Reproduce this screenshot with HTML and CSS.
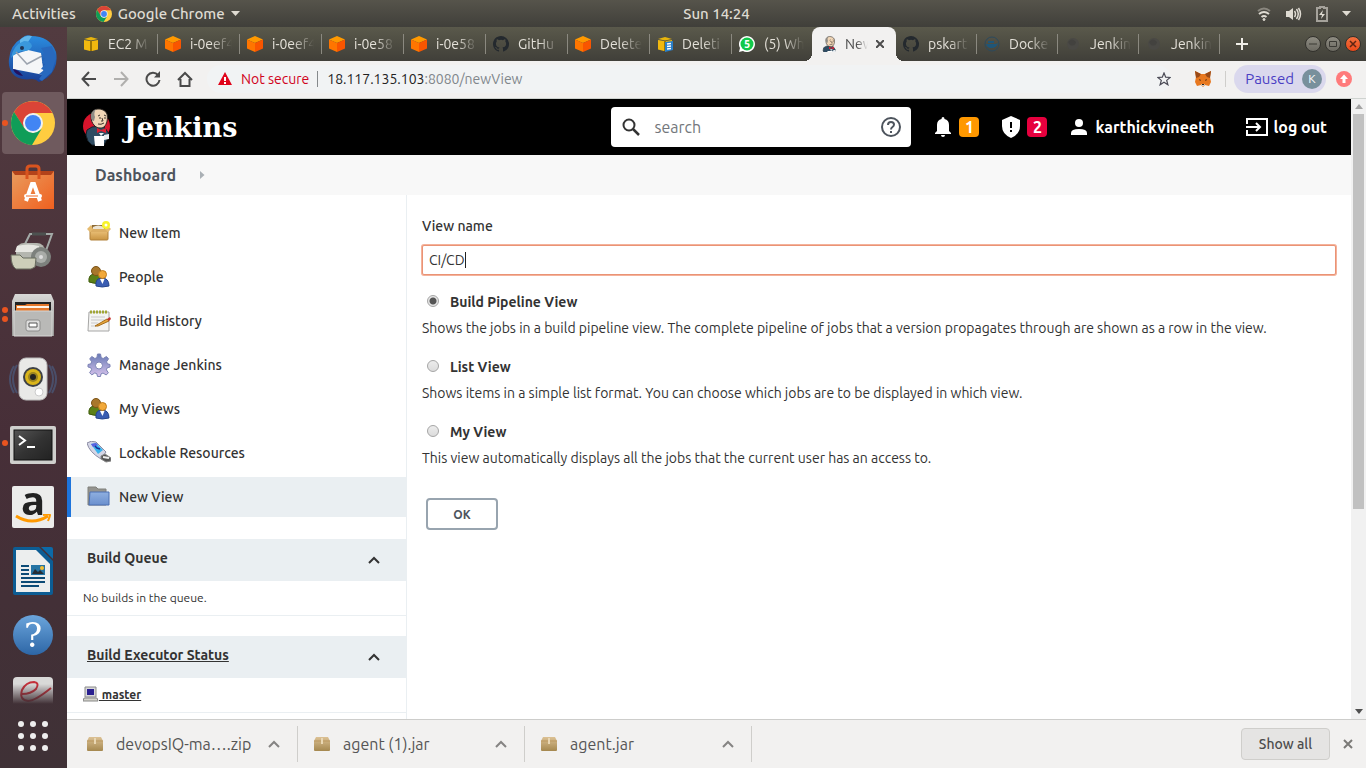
FILE: index.html
```html
<!DOCTYPE html>
<html lang="en">
<head>
<meta charset="utf-8">
<title>New View [Jenkins]</title>
<link rel="stylesheet" href="styles.css">
</head>
<body>
<svg class="defs" width="0" height="0" aria-hidden="true">
  <defs>
    <linearGradient id="gBox" x1="0" y1="0" x2="0" y2="1"><stop offset="0" stop-color="#dcc194"/><stop offset="1" stop-color="#a5884f"/></linearGradient>
    <linearGradient id="gBlue" x1="0" y1="0" x2="0" y2="1"><stop offset="0" stop-color="#2b8de0"/><stop offset="1" stop-color="#1a3f96"/></linearGradient>
    <linearGradient id="gBag" x1="0" y1="0" x2="1" y2="1"><stop offset="0" stop-color="#e99c5e"/><stop offset="1" stop-color="#f0601f"/></linearGradient>
    <linearGradient id="gGrey" x1="0" y1="0" x2="0" y2="1"><stop offset="0" stop-color="#d8d8d6"/><stop offset="1" stop-color="#959593"/></linearGradient>
    <linearGradient id="gTerm" x1="0" y1="0" x2="1" y2="1"><stop offset="0" stop-color="#555"/><stop offset=".5" stop-color="#333"/><stop offset="1" stop-color="#222"/></linearGradient>
    <linearGradient id="gGear" x1="0" y1="0" x2="0" y2="1"><stop offset="0" stop-color="#6679b5"/><stop offset="1" stop-color="#d9c4ec"/></linearGradient>
    <linearGradient id="gFold" x1="0" y1="0" x2="0" y2="1"><stop offset="0" stop-color="#8fb0e0"/><stop offset="1" stop-color="#6a8fce"/></linearGradient>
    <linearGradient id="gCard" x1="0" y1="0" x2="0" y2="1"><stop offset="0" stop-color="#eec47c"/><stop offset="1" stop-color="#c99442"/></linearGradient>
  </defs>
  <symbol id="chrome" viewBox="0 0 44 44">
    <circle cx="22" cy="22" r="22" fill="#ffcd40"/>
    <path d="M3 11A22 22 0 0 1 41.300 12H22L13 27Z" fill="#db4437"/>
    <path d="M3 11A22 22 0 0 0 21 44L30.500 28 22 32 13.300 27Z" fill="#0f9d58"/>
    <circle cx="22" cy="22" r="10" fill="#f1f1f1"/><circle cx="22" cy="22" r="8" fill="#4285f4"/>
  </symbol>
  <symbol id="cube" viewBox="0 0 16 16"><path d="M8 0l8 3.500L8 7 0 3.500Z" fill="#ff9900"/><path d="M0 3.500L8 7v9l-8-3.500Z" fill="#ff7500"/><path d="M16 3.500L8 7v9l8-3.500Z" fill="#f95500"/></symbol>
  <symbol id="ybox" viewBox="0 0 16 16"><path d="M8 1l7 2-7 1.500L1 3Z" fill="#e8b50c"/><path d="M1 4l6 1v10l-6-1.500Z" fill="#f2b90f"/><path d="M15 4L9 5v10l6-1.500Z" fill="#f2b90f"/><path d="M7 5h2v10H7Z" fill="#9f7804"/></symbol>
  <symbol id="github" viewBox="0 0 16 16"><path fill="#24292e" d="M8 0C3.580 0 0 3.580 0 8c0 3.540 2.290 6.530 5.470 7.590.4.070.55-.17.55-.38v-1.490c-2.010.37-2.530-.49-2.690-.94-.09-.23-.48-.94-.82-1.130-.28-.15-.68-.52-.01-.53.63-.01 1.080.58 1.230.82.72 1.210 1.870.87 2.330.66.07-.52.28-.87.51-1.070-1.780-.2-3.640-.89-3.640-3.950 0-.87.31-1.590.82-2.150-.08-.2-.36-1.020.08-2.120 0 0 .67-.21 2.200.82a7.600 7.600 0 0 1 4 0c1.530-1.040 2.200-.82 2.200-.82.44 1.100.16 1.920.08 2.120.51.56.82 1.270.82 2.150 0 3.070-1.870 3.750-3.650 3.950.29.25.54.73.54 1.480v2.200c0 .21.15.46.55.38A8 8 0 0 0 8 0Z"/></symbol>
  <symbol id="butler" viewBox="0 0 28 38">
    <path d="M9 19l-5 3-1 5 2 6 4 4h12l3-6 2-5-4-6-4-2Z" fill="#2f4c62" stroke="#16222c"/>
    <path d="M8 8C8-1 21-1 24 6c1 5 0 10-3 13-3 2-8 1-10-2C9 15 8 12 8 8Z" fill="#f0d6b7" stroke="#2b2723"/>
    <path d="M8 8C8 4 11 2 13 1c-2 3-2 6-1 8l-1 4Q8 13 8 8Z" fill="#8d8b85"/>
    <path d="M15 8l2-1m4 0l2 1m-7 2h2m3 0h2m-4 0l1 3h-2m-3 3q3 1 6-1" stroke="#3d332b" fill="none"/>
    <path d="M14 20l4 2 5-2v5l-5-2-4 2Z" fill="#e01f32"/>
    <path d="M16 25l2 3 3-3Z" fill="#eee"/>
    <path d="M11 28h10v10h-9Z" fill="#fff"/><path d="M21 27l5-1v5l-5 1Z" fill="#e7ecf0"/>
  </symbol>
  <symbol id="spinner" viewBox="0 0 16 16"><circle cx="8" cy="8" r="6" fill="#4a4945"/><path d="M3 6q4-5 8 0-1 5-6 3" fill="#43423f"/></symbol>
  <symbol id="parcel" viewBox="0 0 16 14"><path d="M2 0h12l2 4v9q0 1-1 1H1q-1 0-1-1V4Z" fill="url(#gBox)"/><path d="M0 4h16" stroke="#b9975e"/><path d="M7 1h2v6H7Z" fill="#e9d7b4"/></symbol>
  <symbol id="people" viewBox="0 0 24 24">
    <path d="M2 17q-1-8 6-8t8 8q-7 3-14 0Z" fill="#5c8017" stroke="#3f5c0c"/><circle cx="9" cy="6" r="4.500" fill="#a9772b" stroke="#7c5317"/>
    <path d="M9 21q-1-8 6-8t7 8q-7 2-13 0Z" fill="#3a5db2" stroke="#27458c"/><path d="M13 14l2.500 5 2-5Z" fill="#fff"/><circle cx="15.500" cy="9.500" r="4" fill="#f2a93a" stroke="#c07c1c"/>
  </symbol>
  <symbol id="up" viewBox="0 0 12 8"><path d="M1 7l5-5 5 5" fill="none" stroke="currentColor" stroke-width="2"/></symbol>
</svg>

<div class="desktop">
  <header class="topbar">
    <div class="topbar-left">
      <button class="plain">Activities</button>
      <button class="plain app-menu"><svg width="16" height="16"><use href="#chrome"/></svg>Google Chrome<svg width="9" height="5"><path d="M0 0h9L4.500 5Z" fill="#dfdbd2"/></svg></button>
    </div>
    <button class="plain clock">Sun 14:24</button>
    <div class="topbar-right">
      <svg width="16" height="16" viewBox="0 0 16 16" fill="none" stroke="#dfdbd2" stroke-width="2"><path d="M2 5q6-5 12 0" stroke="#8a877f"/><path d="M3 8q5-4 10 0M5.500 11q2.500-2 5 0"/><circle cx="8" cy="13.500" r="1" fill="#dfdbd2" stroke-width="1"/></svg>
      <svg width="16" height="16" viewBox="0 0 16 16" fill="none" stroke="#dfdbd2" stroke-width="1.500"><path d="M0 5h3l4-3v12l-4-3H0Z" fill="#dfdbd2" stroke="none"/><path d="M8.500 5q2 3 0 6M10.500 3q3.500 5 0 10M12.500 2q4 6 0 12"/></svg>
      <svg width="12" height="16" viewBox="0 0 12 16"><path d="M1 2h3V1h4v1h3v13H1Z" fill="none" stroke="#a5a29b" stroke-width="2"/><path d="M7 4L3 9h3l-1 4 4-5H6Z" fill="#dfdbd2"/></svg>
      <svg width="9" height="5"><path d="M0 0h9L4.500 5Z" fill="#dfdbd2"/></svg>
    </div>
  </header>

  <nav class="dock" aria-label="Dock">
    <div class="dock-apps">
    <button class="dock-item" aria-label="Thunderbird"><svg width="50" height="50" viewBox="0 0 50 50"><path d="M1 25Q2 11 14 4q4-4 9-2 19 0 25 16 3 16-9 26l-8 4q-3-3-7-3-14 2-20-6-4-6-3-14Z" fill="url(#gBlue)"/><path d="M12 6q5-5 12-4l-4 6-8 3Z" fill="#63b8ec"/><path d="M5 21l15-5 13 3 3 22-31-6Z" fill="#f5f6f8"/><path d="M3 24q2-13 13-17 7 0 8 5-2 6-10 5-7 2-11 7Z" fill="#3a98dc"/><path d="M8 18l11 12 15-8" fill="none" stroke="#9ca3ae" stroke-width="1.500"/><path d="M33 14l11-2 4 12-4 14-10 9-3-2 3-4-3-1 5-4-3-1 4-5-3-1 3-5-4-1 3-4Z" fill="#2869be"/><path d="M5 35q6 1 10 7-8-1-10-7Z" fill="#24125e"/><circle cx="14" cy="14" r="2" fill="#203454"/></svg></button>
    <button class="dock-item active one" aria-label="Google Chrome"><svg width="44" height="44"><use href="#chrome"/></svg></button>
    <button class="dock-item" aria-label="Ubuntu Software"><svg width="46" height="46" viewBox="0 0 46 46"><path d="M2 7h42v38H2Z" fill="url(#gBag)"/><path d="M2 7l3 4h36l3-4Z" fill="#b3421a"/><path d="M17 15V5q0-3 3-3h6q3 0 3 3v10" fill="none" stroke="#d9541f" stroke-width="3"/><path d="M16 37l6-17h2l6 17" fill="none" stroke="#fff" stroke-width="4"/><rect x="14" y="30" width="18" height="4" rx="2" fill="#fff"/><path d="M16 32h12" stroke="#ee6a2a"/></svg></button>
    <button class="dock-item" aria-label="Document Scanner"><svg width="46" height="42" viewBox="0 0 46 42"><path d="M14 16l6-12h22L34 26" fill="none" stroke="#a3aaa7" stroke-width="2"/><path d="M22 4h14" stroke="#4d5250" stroke-width="3"/><rect x="6" y="13" width="29" height="18" rx="8" fill="#b4b6af"/><path d="M7 16q11-3 22 0v6H5Z" fill="#e6e6e1"/><circle cx="31" cy="27" r="10" fill="#7d817d"/><circle cx="31" cy="27" r="6" fill="#a9aca8"/><circle cx="31" cy="27" r="2" fill="#ddd"/><path d="M1 25h9l3 3h13l-1 9-4 2H6q-5-3-5-14Z" fill="#cdceb9" stroke="#696c5f"/></svg></button>
    <button class="dock-item two" aria-label="Files"><svg width="44" height="44" viewBox="0 0 44 44"><path d="M4 1h36l3 7v35H1V8Z" fill="url(#gGrey)"/><path d="M4 9h36v10H4Z" fill="#222"/><path d="M5 12h9l2-1h22v8H5Z" fill="#e4772a"/><path d="M6 14h32" stroke="#fff3e6" stroke-width="2"/><path d="M3 18h38v25H3Z" fill="#b9b9b7" stroke="#d6d6d5"/><rect x="15" y="27" width="14" height="11" rx="2" fill="#ddd" stroke="#8d8d8c"/><path d="M18 30h8v4h-8Z" fill="#fff" stroke="#555"/></svg></button>
    <button class="dock-item" aria-label="Rhythmbox"><svg width="50" height="44" viewBox="0 0 50 44"><g fill="none" stroke="#4b628b" stroke-width="2" opacity=".6"><path d="M6 9q-8 13 0 27M9 8q-8 14 0 28M44 9q8 13 0 27M41 8q8 14 0 28"/></g><rect x="11" y="1" width="28" height="42" rx="7" fill="#e9e9e7" stroke="#bbb"/><circle cx="25" cy="20" r="10" fill="#3e4146"/><circle cx="25" cy="20" r="8" fill="#dab51b"/><circle cx="25" cy="20" r="5" fill="#9c8420"/><circle cx="25" cy="20" r="3" fill="#222"/><circle cx="31" cy="35" r="4" fill="#fff" stroke="#ccc"/></svg></button>
    <button class="dock-item one" aria-label="Terminal"><svg width="46" height="42" viewBox="0 0 46 42"><rect y="4" width="46" height="38" rx="2" fill="#cfcfcd"/><rect x="4" y="8" width="38" height="30" fill="url(#gTerm)" stroke="#111"/><path d="M9 14l6 4.500L9 23M17 25h8" fill="none" stroke="#fff" stroke-width="2"/></svg></button>
    <button class="dock-item" aria-label="Amazon"><span class="amazon">a<svg width="38" height="10" viewBox="0 0 38 10"><path d="M2 2q16 10 32 0" fill="none" stroke="#f90" stroke-width="3"/><path d="M29 1q7-1 7 0t-2 6" fill="none" stroke="#f90" stroke-width="2"/></svg></span></button>
    <button class="dock-item" aria-label="LibreOffice Writer"><svg width="40" height="48" viewBox="0 0 40 48"><path d="M0 2q0-2 2-2h24l14 14v32q0 2-2 2H2q-2 0-2-2Z" fill="#0c5d94"/><path d="M28 0h10q2 0 2 2v10Z" fill="#0c6aa8"/><path d="M3 3h20l14 14v28H3Z" fill="#eceeee"/><path d="M8 19h8M8 23h8M8 27h8M8 31h24M8 35h24M8 39h18" stroke="#0c4b76" stroke-width="2"/><path d="M18 18h14v10H18Z" fill="#2574a4"/><path d="M19 27l3-5 3 3 2-2 4 4Z" fill="#252e36"/><circle cx="29" cy="21" r="2" fill="#f5bf32"/></svg></button>
    <button class="dock-item" aria-label="Help"><span class="help">?</span></button>
    <button class="dock-item" aria-label="Document Viewer"><svg width="42" height="46" viewBox="0 0 42 46"><rect x="1" y="1" width="40" height="44" rx="4" fill="#d9d9d8"/><path d="M10 18q9 0 14-5 4-6-2-7-8 0-12 8-3 10 6 11 7 0 23-13" fill="none" stroke="#c4303a" stroke-width="2"/></svg></button>
    </div>
    <button class="apps-grid" aria-label="Show Applications"><i></i><i></i><i></i><i></i><i></i><i></i><i></i><i></i><i></i></button>
  </nav>

  <div class="browser">
    <div class="tabs">
      <button class="tab"><svg width="16" height="16"><use href="#ybox"/></svg><span>EC2 M</span></button>
      <button class="tab"><svg width="16" height="16"><use href="#cube"/></svg><span>i-0eef4</span></button>
      <button class="tab"><svg width="16" height="16"><use href="#cube"/></svg><span>i-0eef4</span></button>
      <button class="tab"><svg width="16" height="16"><use href="#cube"/></svg><span>i-0e58</span></button>
      <button class="tab"><svg width="16" height="16"><use href="#cube"/></svg><span>i-0e58</span></button>
      <button class="tab"><svg width="16" height="16"><use href="#github"/></svg><span>GitHu</span></button>
      <button class="tab"><svg width="16" height="16"><use href="#cube"/></svg><span>Delete</span></button>
      <button class="tab"><svg width="16" height="16" viewBox="0 0 16 16"><use href="#ybox"/><path d="M8 6l8-1v9l-8 2Z" fill="#2a7fc9"/><path d="M10 8l4-.5M10 10.500l4-.5M10 13l4-.5" stroke="#fff" stroke-width="1.500"/></svg><span>Deleti</span></button>
      <button class="tab last"><svg width="16" height="16" viewBox="0 0 16 16"><path d="M0 16l1-4a8 8 0 1 1 3 3Z" fill="#fff"/><circle cx="8" cy="8" r="6.500" fill="#12c94b"/><text x="8" y="12" text-anchor="middle" class="wa">5</text></svg><span>(5) Wh</span></button>
      <button class="tab current"><svg width="16" height="16" viewBox="2 0 24 30"><use href="#butler" width="28" height="38"/></svg><span>New</span><svg width="8" height="8" viewBox="0 0 8 8"><path d="M0 0l8 8M8 0L0 8" stroke="#4d4d4d" stroke-width="2"/></svg></button>
      <button class="tab after"><svg width="16" height="16"><use href="#github"/></svg><span>pskart</span></button>
      <button class="tab after"><svg width="16" height="16" viewBox="0 0 16 16"><circle cx="8" cy="8" r="7" fill="none" stroke="#2b4a5e"/><path d="M2 8h10l2-1q-1 5-7 5-4 0-5-4ZM4 5h6v2H4Z" fill="#1f5678"/></svg><span>Docke</span></button>
      <button class="tab after"><svg width="16" height="16"><use href="#spinner"/></svg><span>Jenkin</span></button>
      <button class="tab after"><svg width="16" height="16"><use href="#spinner"/></svg><span>Jenkin</span></button>
      <button class="plain new-tab" aria-label="New tab"><svg width="12" height="12"><path d="M6 0v12M0 6h12" stroke="#f0eee8" stroke-width="2"/></svg></button>
      <div class="win-buttons">
        <button aria-label="Minimize"><svg width="8" height="8"><path d="M0 4h8" stroke="#3b3a35"/></svg></button>
        <button aria-label="Maximize"><svg width="8" height="8"><path d="M.5 1.500h7v5h-7Z" fill="none" stroke="#3b3a35"/></svg></button>
        <button class="close" aria-label="Close"><svg width="8" height="8"><path d="M1 1l6 6M7 1L1 7" stroke="#5d2412" stroke-width="1.500"/></svg></button>
      </div>
    </div>

    <div class="toolbar">
      <div class="nav-buttons">
        <button class="plain" aria-label="Back"><svg width="16" height="16" fill="none" stroke="#4a4a4a" stroke-width="2"><path d="M15 8H2M8 1L1.500 8 8 15"/></svg></button>
        <button class="plain" aria-label="Forward"><svg width="16" height="16" fill="none" stroke="#b0afad" stroke-width="2"><path d="M1 8h13M8 1l6.500 7L8 15"/></svg></button>
        <button class="plain" aria-label="Reload"><svg width="16" height="16" fill="none" stroke="#4a4a4a" stroke-width="2"><path d="M13 4A6.500 6.500 0 1 0 14.500 9"/><path d="M15 0v6.500H9Z" fill="#4a4a4a" stroke="none"/></svg></button>
        <button class="plain" aria-label="Home"><svg width="16" height="16" fill="none" stroke="#4a4a4a" stroke-width="2"><path d="M1 9l7-7 7 7M3.500 8v7h9V8"/></svg></button>
      </div>
      <div class="omnibox">
        <svg width="14" height="13"><path d="M7 0l7 13H0Z" fill="#e0041b"/><path d="M7 5v4M7 10v2" stroke="#fff" stroke-width="2"/></svg>
        <span class="insecure">Not secure</span><span class="bar"></span>
        <span class="url">18.117.135.103<em>:8080/newView</em></span>
        <button class="plain star" aria-label="Bookmark"><svg width="14" height="14" viewBox="0 0 14 14"><path d="M7 1l1.700 4.200 4.500.3-3.500 2.900 1.200 4.400L7 10.300l-3.900 2.500 1.200-4.400L.8 5.500l4.500-.3Z" fill="none" stroke="#4a4a55" stroke-width="1.200"/></svg></button>
      </div>
      <button class="plain" aria-label="MetaMask"><svg width="16" height="16" viewBox="0 0 16 16"><path d="M0 0l6 3h4l6-3-1 6 1 5-2 4-4-1-2 2-2-2-4 1-2-4 1-5Z" fill="#e8781f"/><path d="M0 0l6 3-2 3-3 1ZM16 0l-6 3 2 3 3 1Z" fill="#9a4a17"/><path d="M4 8l2 1-1 1ZM12 8l-2 1 1 1Z" fill="#3b2313"/><path d="M6 13h4l-1 2H7Z" fill="#d9cfc4"/><path d="M7 13h2v1H7Z" fill="#222"/></svg></button>
      <span class="bar light"></span>
      <button class="profile">Paused<b>K</b></button>
      <button class="plain" aria-label="Update Chrome"><svg width="16" height="16"><circle cx="8" cy="8" r="8" fill="#ff7b7b"/><path d="M8 3.500l4 4.500h-2.500v4h-3V8H4Z" fill="#fff"/></svg></button>
    </div>

    <div class="viewport">
      <div class="page">
        <header class="jheader">
          <a class="brand" href="#"><svg width="28" height="38"><circle cx="13.500" cy="18" r="13.500" fill="#d8142c"/><use href="#butler"/></svg>Jenkins</a>
          <form class="search">
            <svg width="18" height="18" fill="none" stroke="#333" stroke-width="2"><circle cx="7" cy="7" r="5.500"/><path d="M11 11l6 6" stroke-width="2.500"/></svg>
            <input type="text" placeholder="search" aria-label="search">
            <svg width="20" height="20" fill="none" stroke="#4d545d" stroke-width="2"><circle cx="10" cy="10" r="9"/><path d="M7 8q0-3 3-3t3 2.500q0 1.500-1.500 2.500T10 12.500M10 14v2"/></svg>
          </form>
          <a class="notice" href="#"><svg width="16" height="20" fill="#fff"><path d="M8 0q1.500 0 1.500 2 4.500 1 4.500 6v6l2 2v1H0v-1l2-2V8q0-5 4.500-6Q6.500 0 8 0ZM6 18h4q0 2-2 2t-2-2Z"/></svg><span class="badge">1</span></a>
          <a class="notice" href="#"><svg width="18" height="22"><path d="M9 0l9 4v6q0 8-9 12Q0 18 0 10V4Z" fill="#fff"/><path d="M9 6v6M9 14v2" stroke="#000" stroke-width="2"/></svg><span class="badge red">2</span></a>
          <a class="user" href="#"><svg width="16" height="16" fill="#fff"><circle cx="8" cy="4" r="4"/><path d="M0 16v-2q0-4 8-4t8 4v2Z"/></svg>karthickvineeth</a>
          <a class="logout" href="#"><svg width="22" height="18" fill="none" stroke="#fff" stroke-width="2"><path d="M1 6V1h20v16H1v-5M0 9h13M10 5l4 4-4 4"/></svg>log out</a>
        </header>
        <nav class="crumbs"><a href="#">Dashboard</a><svg width="5" height="8"><path d="M0 0l4.500 4L0 8Z" fill="#aab0b5"/></svg></nav>
        <div class="columns">
          <aside class="side">
            <nav class="tasks">
              <a href="#"><svg width="24" height="24" viewBox="0 0 24 24"><path d="M3 9h18v9q0 1-1 1H4q-1 0-1-1Z" fill="url(#gCard)" stroke="#b1813a"/><path d="M5 4h13l3 5H3Z" fill="#8d6a34"/><path d="M6 6q5-3 11 0v3H6Z" fill="#ece4d4"/><path d="M3 8h18v3H3Z" fill="#dcae64"/><path d="M4 4L0 8l3 3 3-3ZM20 4l4 4-3 3-3-3Z" fill="#e6bb70"/><circle cx="19" cy="4" r="4" fill="#f8f32b"/><circle cx="19" cy="4" r="1.500" fill="#fff"/></svg>New Item</a>
              <a href="#"><svg width="24" height="24"><use href="#people"/></svg>People</a>
              <a href="#"><svg width="24" height="24" viewBox="0 0 24 24"><path d="M2 3h20v19H1Z" fill="#f4f4f3" stroke="#a6a6a5"/><path d="M3 3h18" stroke="#a1a634" stroke-width="3" stroke-dasharray="2 1"/><path d="M4 8h14M4 11h14M4 14h7M4 17h5" stroke="#c9c9c9"/><path d="M8 17l12-7 2 2-11 5Z" fill="#e8a73d" stroke="#a56d1c"/><path d="M20 10l3-2 1 2-2 2Z" fill="#c8322d"/></svg>Build History</a>
              <a href="#"><svg width="24" height="24" viewBox="0 0 24 24"><g fill="url(#gGear)" stroke="#7c83b5"><path fill-rule="evenodd" d="M10.500 1h3l.7 3.600 2 .9 3.200-2 2.200 2.200-2 3.100.8 2 2.600.7v2.500l-2.800.8-.8 2 2 3-2.200 2.200-3.200-2-2 .9-.5 2.600h-3l-.7-2.800-2-.8-3 2-2.200-2.200 2-3-.8-2L1 14v-2.500l2.800-.7.9-2-2-3.100L4.900 3.500l3 2 2-.9ZM12 9a3.500 3.500 0 1 0 0 7 3.500 3.500 0 1 0 0-7Z"/></g></svg>Manage Jenkins</a>
              <a href="#"><svg width="24" height="24"><use href="#people"/></svg>My Views</a>
              <a href="#"><svg width="24" height="24" viewBox="0 0 24 24"><path d="M0 2q4-3 9-1l10 10-5 7Q2 11 0 2Z" fill="#d5d6e6" stroke="#8b8ca3"/><path d="M4 3l5-1 7 7-5 4Z" fill="#38b3ee"/><path d="M4 3l5-1 2 2-5 2Z" fill="#5a5fe0"/><path d="M8 5l2 2 3 1" stroke="#1a2a91" fill="none" stroke-width="1.500"/><path d="M14 15l4-2 6 4v3l-5 1-5-3Z" fill="#555" stroke="#888"/><path d="M16 16l6 1" stroke="#eee" stroke-width="2"/></svg>Lockable Resources</a>
              <a class="selected" href="#"><svg width="24" height="24" viewBox="0 0 24 24"><path d="M1 2h8l2 2h8v16H1Z" fill="#94948f" stroke="#80807c"/><path d="M3 7h19v13H2Z" fill="url(#gFold)" stroke="#4d71b3"/></svg>New View</a>
            </nav>
            <section class="pane">
              <h2>Build Queue<button class="plain" aria-label="Collapse"><svg width="12" height="8"><use href="#up"/></svg></button></h2>
              <p>No builds in the queue.</p>
            </section>
            <section class="pane">
              <h2><a href="#">Build Executor Status</a><button class="plain" aria-label="Collapse"><svg width="12" height="8"><use href="#up"/></svg></button></h2>
              <p class="node"><svg width="16" height="16" viewBox="0 0 16 16"><path d="M2 1h11v10H2Z" fill="#d7d7d7" stroke="#8b8b8b"/><path d="M4 3h7v6H4Z" fill="#2a2090"/><path d="M1 12h13l1 3H0Z" fill="#d4d4ca" stroke="#888"/></svg><a href="#">&nbsp;master</a></p>
            </section>
          </aside>
          <main class="main">
            <form>
              <label class="name-label" for="name">View name</label>
              <div class="name-box"><input class="name" id="name" type="text" value="CI/CD"><span class="caret"></span></div>
              <div class="option"><input type="radio" name="mode" id="m1" checked><label for="m1">Build Pipeline View</label></div>
              <p>Shows the jobs in a build pipeline view. The complete pipeline of jobs that a version propagates through are shown as a row in the view.</p>
              <div class="option"><input type="radio" name="mode" id="m2"><label for="m2">List View</label></div>
              <p>Shows items in a simple list format. You can choose which jobs are to be displayed in which view.</p>
              <div class="option"><input type="radio" name="mode" id="m3"><label for="m3">My View</label></div>
              <p>This view automatically displays all the jobs that the current user has an access to.</p>
              <button class="ok" type="button">OK</button>
            </form>
          </main>
        </div>
      </div>
      <div class="scrollbar"><svg width="8" height="5"><path d="M0 5h8L4 0Z" fill="#a3a3a3"/></svg><div class="track"><div class="thumb"></div></div><svg width="8" height="5"><path d="M0 0h8L4 5Z" fill="#505050"/></svg></div>
    </div>

    <footer class="downloads">
      <button class="download"><svg width="16" height="14"><use href="#parcel"/></svg><span>devopsIQ-ma….zip</span><svg class="chev" width="12" height="8"><use href="#up"/></svg></button>
      <button class="download"><svg width="16" height="14"><use href="#parcel"/></svg><span>agent (1).jar</span><svg class="chev" width="12" height="8"><use href="#up"/></svg></button>
      <button class="download"><svg width="16" height="14"><use href="#parcel"/></svg><span>agent.jar</span><svg class="chev" width="12" height="8"><use href="#up"/></svg></button>
      <button class="show-all">Show all</button>
      <button class="plain" aria-label="Close"><svg width="10" height="10"><path d="M1 1l8 8M9 1L1 9" stroke="#7b7a77" stroke-width="2"/></svg></button>
    </footer>
  </div>
</div>
</body>
</html>
```
FILE: styles.css
```css
* { box-sizing: border-box; }
body { margin: 0; font: 14px "Ubuntu", "Noto Sans", sans-serif; color: #333; }
button, input { font: inherit; }
button { cursor: pointer; }
svg { display: block; flex: none; }
.defs { position: absolute; }
.plain { display: flex; align-items: center; padding: 0; border: 0; background: none; color: inherit; }

.desktop { display: grid; grid-template: 27px minmax(0, 1fr) / 67px minmax(0, 1fr); height: 100vh; overflow: hidden; }
.topbar { grid-column: 1 / -1; display: grid; grid-template-columns: 67px 1fr auto 1fr; align-items: center; background: linear-gradient(#56544b, #403f3a); color: #dfdbd2; font-size: 15px; font-weight: 500; }
.topbar-left, .topbar-right, .app-menu { display: flex; align-items: center; }
.topbar-left { grid-column: 1 / 3; gap: 20px; padding-left: 12px; }
.app-menu { gap: 6px; }
.topbar-right { justify-content: flex-end; gap: 14px; padding-right: 15px; }

.dock { display: flex; flex-direction: column; min-height: 0; background: linear-gradient(#523b40, #472f38 55%, #3f3136); }
.dock-apps { flex: 1; min-height: 0; overflow: hidden; -webkit-mask-image: linear-gradient(#000 calc(100% - 20px), transparent); mask-image: linear-gradient(#000 calc(100% - 20px), transparent); }
.dock-item { position: relative; display: flex; align-items: center; justify-content: center; width: 62px; height: 62px; margin: 1px 2px 2px; padding: 0; border: 0; border-radius: 4px; background: none; }
.dock-item.active { background: #6f5a5e; }
.one::before, .two::before { content: ""; position: absolute; left: 0; width: 6px; height: 6px; border-radius: 50%; background: #e95420; }
.two::before { top: 23px; box-shadow: 0 9px #e95420; }
.amazon { display: flex; flex-direction: column; align-items: center; width: 42px; height: 42px; border-radius: 2px; background: #ececeb; color: #222; font: bold 40px/28px "Open Sans", sans-serif; }
.help { width: 40px; height: 40px; border-radius: 50%; background: linear-gradient(#6ba5dc, #2d66a6); color: #fff; font: 34px/40px "DejaVu Serif", serif; }
.apps-grid { display: grid; grid-template-columns: repeat(3, 6px); gap: 6px; place-content: center; flex: none; height: 64px; padding: 0 2px 0 0; border: 0; background: none; }
.apps-grid i { height: 6px; border-radius: 50%; background: #eee; }

.browser { display: flex; flex-direction: column; min-width: 0; min-height: 0; }
.tabs { display: flex; height: 34px; padding: 0 5px 0 9px; background: linear-gradient(#5a594b, #403f39); flex: none; }
.tab { display: flex; align-items: center; flex: 0 1 82px; min-width: 0; padding: 0 8px 0 7px; gap: 9px; border: 0; background: linear-gradient(#8b8980, #8b8980) right center / 1px 20px no-repeat; color: #e4e1d9; text-align: left; }
.tab span { flex: 1; min-width: 0; overflow: hidden; white-space: nowrap; -webkit-mask-image: linear-gradient(90deg, #000 50%, transparent); mask-image: linear-gradient(90deg, #000 50%, transparent); }
.tab.last { flex-basis: 80px; background: none; }
.tab.current { position: relative; flex-basis: 84px; padding: 0 12px 0 9px; gap: 8px; border-radius: 8px 8px 0 0; background: #f2f1f0; color: #4c4c4c; }
.tab.current::before, .tab.current::after { content: ""; position: absolute; bottom: 0; width: 8px; height: 8px; }
.tab.current::before { right: 100%; background: radial-gradient(circle at 0 0, transparent 8px, #f2f1f0 8px); }
.tab.current::after { left: 100%; background: radial-gradient(circle at 100% 0, transparent 8px, #f2f1f0 8px); }
.tab.after { flex-basis: 81px; }
.wa { font: bold 10px "Open Sans", sans-serif; fill: #fff; }
.new-tab { margin-left: 16px; }
.win-buttons { display: flex; align-items: center; gap: 4px; margin-left: auto; }
.win-buttons button { display: flex; align-items: center; justify-content: center; width: 16px; height: 16px; padding: 0; border: 1px solid #33322d; border-radius: 50%; background: linear-gradient(#8e8c82, #6c6a62); }
.win-buttons .close { background: linear-gradient(#f4713f, #e9491a); }

.toolbar { display: flex; align-items: center; height: 38px; padding: 0 14px 2px; border-bottom: 1px solid #cfd3d0; background: #f2f1f0; flex: none; }
.nav-buttons { display: flex; gap: 16px; margin-right: 14px; }
.omnibox { display: flex; align-items: center; flex: 1; height: 28px; padding-left: 11px; margin-right: 24px; border-radius: 14px; background: #f1f3f4; }
.insecure { margin-left: 9px; color: #d0021b; }
.bar { width: 1px; height: 16px; margin: 0 9px 0 8px; background: #85898c; }
.bar.light { margin: 0 8px 0 14px; background: #cfcecb; }
.url { color: #222; }
.url em { color: #80868b; font-style: normal; }
.star { margin-left: auto; }
.profile { display: flex; align-items: center; gap: 8px; height: 28px; margin-right: 10px; padding: 0 4px 0 11px; border: 0; border-radius: 14px; background: #dad8ed; color: #4a3fc4; font-size: 15px; }
.profile b { width: 20px; height: 20px; border-radius: 50%; background: #78909c; color: #fff; font-size: 12px; font-weight: 400; line-height: 20px; }

.viewport { display: flex; flex: 1; min-height: 0; }
.page { display: flex; flex-direction: column; flex: 1; min-width: 0; overflow: hidden; background: #fff; }
.jheader { display: flex; align-items: center; height: 56px; padding: 0 24px 0 16px; background: #000; color: #fff; font-size: 16px; font-weight: 700; flex: none; }
.jheader a { display: flex; align-items: center; color: #fff; text-decoration: none; }
.jheader .brand { gap: 13px; margin-right: auto; font: bold 27px "DejaVu Serif", serif; }
.search { display: flex; align-items: center; width: 300px; height: 40px; padding: 0 10px 0 11px; border-radius: 4px; background: #fff; }
.search input { flex: 1; min-width: 0; padding: 0 14px; border: 0; outline: 0; font-weight: 400; }
.search input::placeholder { color: #73777c; }
.notice { gap: 8px; margin-left: 24px; }
.notice + .notice { gap: 7px; margin-left: 23px; }
.badge { width: 20px; height: 20px; border-radius: 4px; background: #ff9800; line-height: 20px; text-align: center; }
.badge.red { background: #e6003e; }
.user { gap: 8px; margin-left: 24px; }
.logout { gap: 5px; margin-left: 32px; }
.crumbs { display: flex; align-items: center; gap: 24px; height: 40px; padding: 0 28px; background: #f8f8f8; font-size: 16px; font-weight: 700; flex: none; }
.crumbs a { color: #4d545d; text-decoration: none; }
.columns { display: flex; flex: 1; min-height: 0; }
.side { width: 340px; padding-top: 18px; border-right: 1px solid #eaeff2; flex: none; }
.tasks { display: flex; flex-direction: column; gap: 4px; margin-bottom: 22px; }
.tasks a { display: flex; align-items: center; gap: 8px; height: 40px; padding-left: 20px; color: #333; font-weight: 500; text-decoration: none; }
.tasks .selected { padding-left: 16px; border-left: 4px solid #1d74dc; background: #eaeff2; }
.pane { margin-bottom: 20px; }
.pane h2 { display: flex; align-items: center; justify-content: space-between; height: 42px; margin: 0; padding: 0 26px 4px 20px; background: #eaeff2; font-size: 14px; font-weight: 700; }
.pane h2 button { padding-top: 4px; }
.pane a { color: inherit; }
.pane p { display: flex; align-items: center; height: 35px; margin: 0; padding: 0 16px 2px; border-bottom: 1px solid #eaeff2; font-size: 12px; }
.pane .node { font-weight: 700; }
.main { flex: 1; min-width: 0; padding: 21px 15px 0; }
.name-label { display: block; font-weight: 500; line-height: 20px; }
.name-box { position: relative; margin: 9px 0 17px; }
.name { display: block; width: 100%; height: 30px; padding: 0 6px; border: 1px solid #ea9375; border-radius: 2px; outline: 0; box-shadow: 0 0 0 1px #f4b29b; color: #333; }
.caret { position: absolute; top: 7px; left: 43px; width: 1px; height: 16px; background: #222; }
.option { display: flex; align-items: center; gap: 11px; height: 20px; padding-left: 5px; font-weight: 700; }
.option input { appearance: none; width: 12px; height: 12px; margin: 0 0 2px; border: 1px solid #a5a5a5; border-radius: 50%; background: linear-gradient(#ececec, #dcdcdc); }
.option input:checked { background: radial-gradient(circle, #555 3px, #e6e6e6 4px); }
.main p { margin: 6px 0 19px; line-height: 20px; white-space: nowrap; }
.ok { width: 72px; height: 32px; margin: 11px 0 0 4px; border: 2px solid #98a4af; border-radius: 4px; background: #fff; color: #4d545d; font-size: 12px; font-weight: 700; }
.scrollbar { display: flex; flex-direction: column; align-items: center; width: 15px; padding: 5px 0; gap: 5px; background: #f1f1f1; flex: none; }
.track { flex: 1; width: 11px; }
.thumb { height: 67%; background: #c1c1c1; }

.downloads { display: flex; align-items: center; height: 49px; padding: 0 13px 0 4px; border-top: 1px solid #cdcdcb; background: #f2f1f0; color: #555; flex: none; }
.download { display: flex; align-items: center; gap: 13px; width: 227px; height: 36px; padding: 0 17px 0 16px; border: 0; border-right: 1px solid #cfcecb; background: none; color: inherit; font-size: 16px; }
.chev { margin-left: auto; color: #858483; }
.show-all { min-width: 89px; height: 32px; margin: 0 13px 0 auto; padding: 0 15px; border: 1px solid #cfcecb; border-radius: 4px; background: #e5e4e3; color: #4c4c4c; font-weight: 500; }
```
